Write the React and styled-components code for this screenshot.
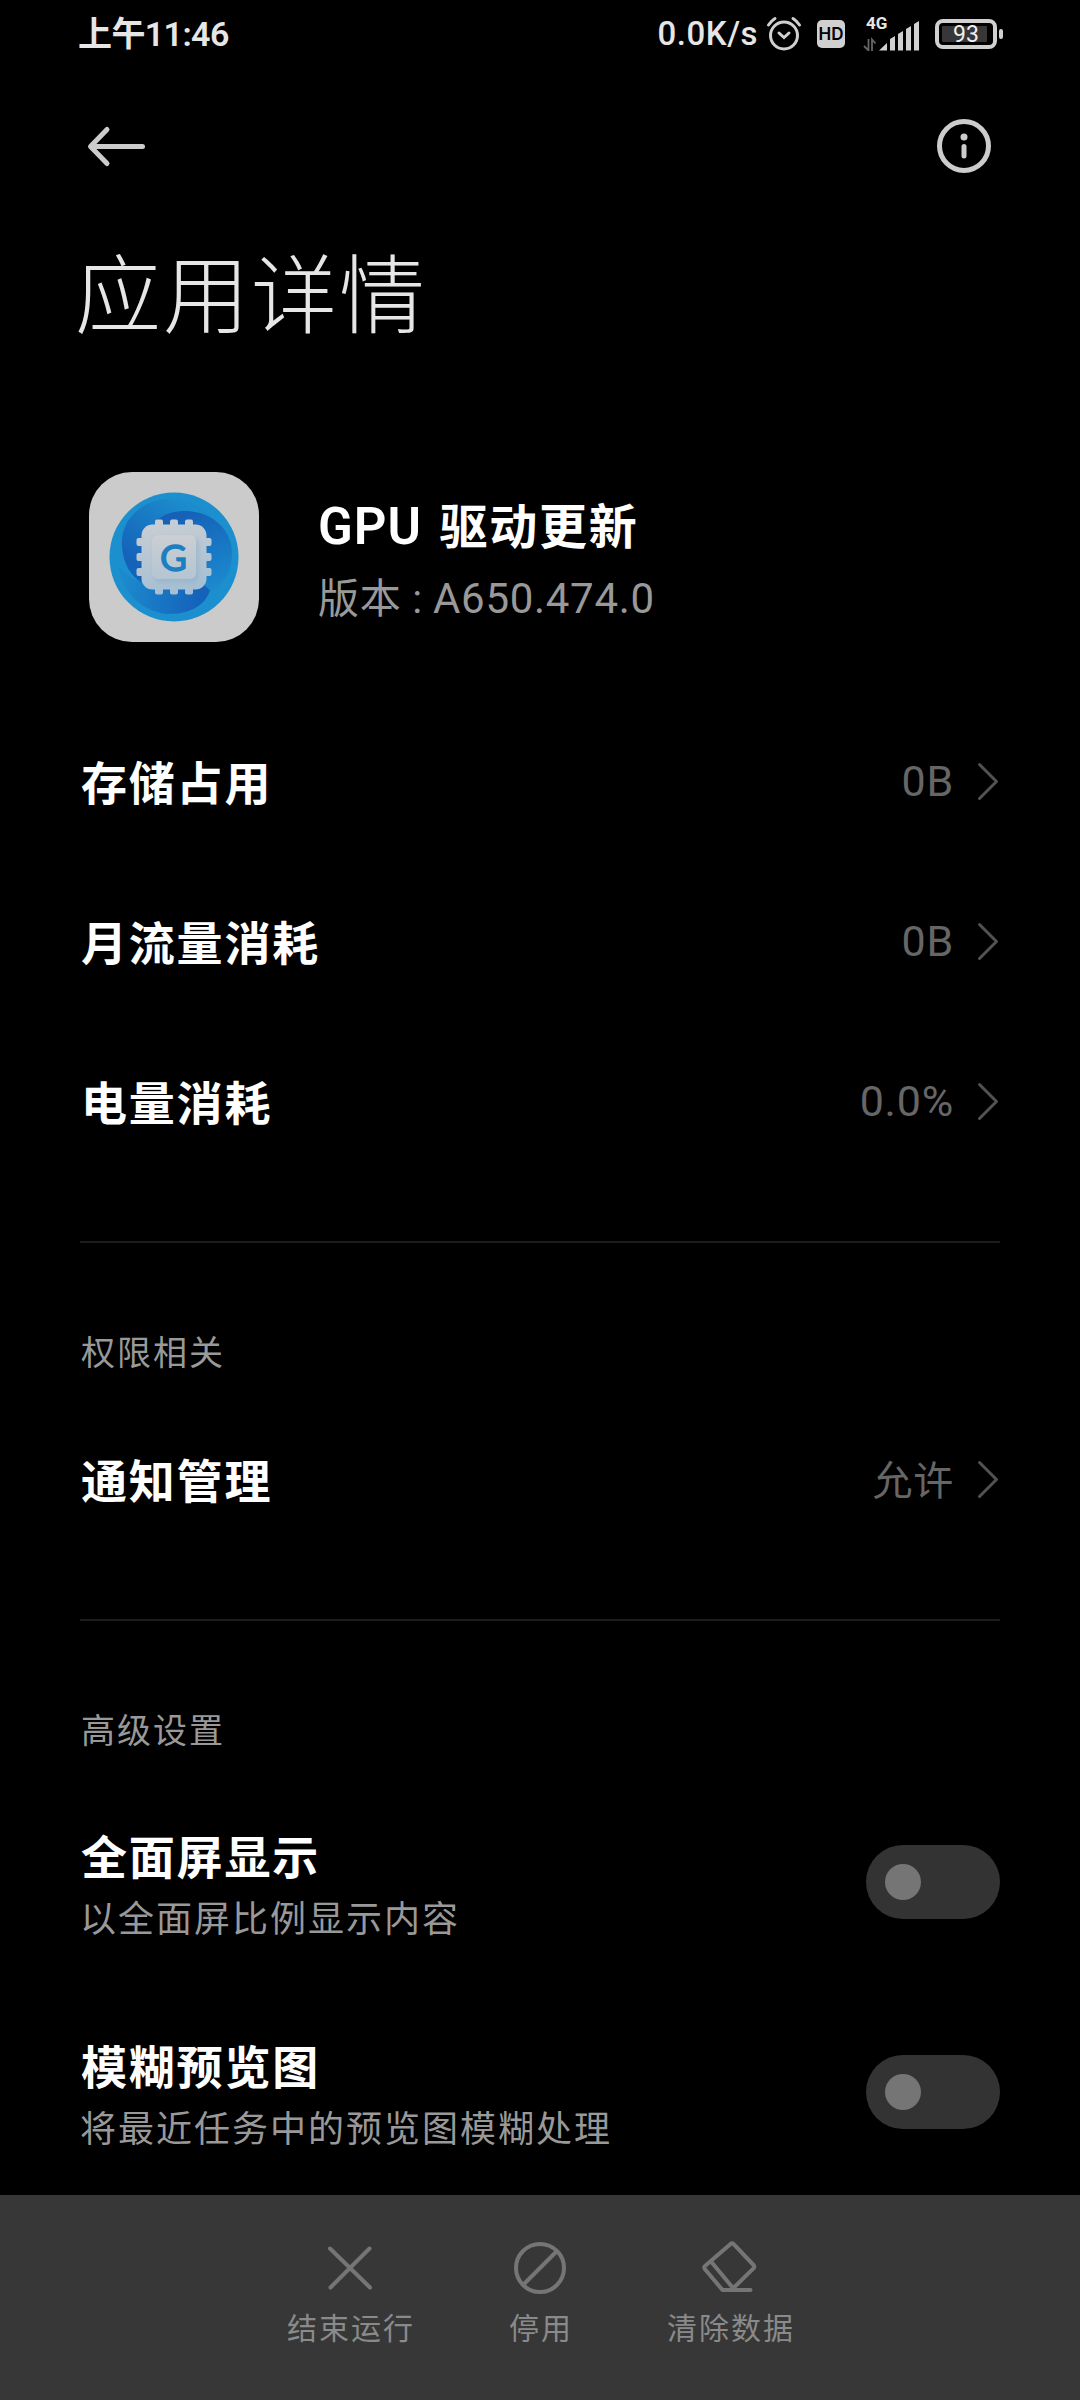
import React from "react";
import styled, { createGlobalStyle } from "styled-components";

const Global = createGlobalStyle`
  * { box-sizing: border-box; }
  body { margin: 0; background: #000; }
  svg { display: block; flex: none; }
`;

const Screen = styled.div`
  width: 1080px;
  height: 2400px;
  background: #000;
  color: #fff;
  display: flex;
  flex-direction: column;
  overflow: hidden;
  font-family: Roboto, "Noto Sans CJK SC", sans-serif;
  white-space: nowrap;
`;

const StatusBar = styled.header`
  height: 68px;
  flex: none;
  display: flex;
  align-items: center;
  justify-content: space-between;
  padding: 0 77px 0 78px;
  color: #e6e6e6;
`;
const Clock = styled.span`
  font-size: 34px;
  line-height: 40px;
  font-weight: 600;
  letter-spacing: -0.6px;
`;
const StatusIcons = styled.div`
  display: flex;
  align-items: center;
`;
const Speed = styled.span`
  font-size: 33px;
  line-height: 40px;
  font-weight: 500;
  letter-spacing: 0.5px;
  margin-right: 8px;
`;

const NavBar = styled.nav`
  height: 156px;
  flex: none;
  display: flex;
  align-items: center;
  justify-content: space-between;
  padding: 0 88px 0 87px;
`;

const Title = styled.h1`
  margin: 0;
  height: 140px;
  flex: none;
  padding: 4px 0 0 75px;
  font-size: 86px;
  line-height: 140px;
  font-weight: 300;
  letter-spacing: 2px;
  color: #e6e6e6;
`;

const AppHeader = styled.section`
  height: 170px;
  flex: none;
  margin-top: 108px;
  padding-left: 89px;
  display: flex;
  align-items: center;
  gap: 59px;
`;
const AppText = styled.div`
  display: flex;
  flex-direction: column;
  padding-top: 10px;
`;
const AppName = styled.h2`
  margin: 0;
  font-size: 48px;
  line-height: 72px;
  font-weight: 600;
  letter-spacing: 1.7px;
`;
const Latin = styled.span`
  font-size: 51px;
  letter-spacing: 1px;
  margin-right: 4px;
`;
const Version = styled.p`
  margin: 0;
  display: flex;
  font-size: 41px;
  line-height: 70px;
  letter-spacing: 0.7px;
  color: #999;
`;
const VersionLabel = styled.span`
  width: 115px;
`;
const VersionNumber = styled.span`
  font-size: 42px;
`;

const List = styled.section`
  display: flex;
  flex-direction: column;
  flex: none;
  margin: ${(p) => p.$margin || "0"};
  padding: 0 80px;
`;
const Row = styled.div`
  height: ${(p) => p.$height || 160}px;
  display: flex;
  align-items: center;
  justify-content: space-between;
`;
const RowTitle = styled.span`
  font-size: 46px;
  line-height: 62px;
  font-weight: 600;
  letter-spacing: 1.8px;
  padding: 3px 0 0 1px;
`;
const RowEnd = styled.span`
  display: flex;
  align-items: center;
  color: #666;
`;
const RowValue = styled.span`
  font-size: ${(p) => (p.$cjk ? 40 : 43)}px;
  line-height: 60px;
  letter-spacing: 0.8px;
  padding-top: ${(p) => (p.$cjk ? 4 : 0)}px;
  padding-bottom: ${(p) => (p.$cjk ? 0 : 2)}px;
  margin-right: 22px;
`;
const RowText = styled.div`
  display: flex;
  flex-direction: column;
  padding-top: 10px;
`;
const RowNote = styled.span`
  font-size: 36px;
  line-height: 62px;
  letter-spacing: 2px;
  color: #999;
`;
const Divider = styled.hr`
  flex: none;
  width: 920px;
  height: 2px;
  margin: 0 80px;
  border: 0;
  background: #1c1c1c;
`;
const GroupLabel = styled.h3`
  margin: 0;
  height: 48px;
  padding: 2px 0 0 1px;
  font-size: 34px;
  line-height: 48px;
  font-weight: 400;
  letter-spacing: 2px;
  color: #999;
`;

const Switch = styled.span`
  width: 134px;
  height: 74px;
  border-radius: 37px;
  padding-left: 19px;
  background: #333;
  display: flex;
  align-items: center;
`;
const Knob = styled.span`
  width: 36px;
  height: 36px;
  border-radius: 50%;
  background: #757575;
`;

const ActionBar = styled.footer`
  height: 205px;
  flex: none;
  margin-top: auto;
  padding-top: 43px;
  background: #373737;
  display: flex;
  justify-content: center;
`;
const Action = styled.button`
  width: 190px;
  padding: 0;
  border: 0;
  background: none;
  color: #8a8a8a;
  font: 400 30px/44px Roboto, "Noto Sans CJK SC", sans-serif;
  letter-spacing: 2px;
  display: flex;
  flex-direction: column;
  align-items: center;
  gap: 9px;
`;
const ActionLabel = styled.span`
  padding-left: 2px;
`;

const Chevron = () => (
  <svg width="24" height="40" viewBox="0 0 24 40" fill="none" stroke="#525252" strokeWidth="3" strokeLinecap="round" strokeLinejoin="round">
    <path d="M3.500 2.500 20.500 19.500 3.500 36.500" />
  </svg>
);

const AlarmIcon = () => (
  <svg width="36" height="36" viewBox="0 0 36 36" fill="none" stroke="#d0d0d0" strokeWidth="3" strokeLinecap="round">
    <circle cx="18" cy="19.500" r="13.500" />
    <path d="m13 17 5 4.500 5-4.500M2.500 9Q5 5 9 2.500M33.500 9Q31 5 27 2.500" />
  </svg>
);

const HdBadge = styled.span`
  width: 28px;
  height: 28px;
  margin: 0 18px 0 15px;
  border-radius: 5px;
  background: #d0d0d0;
  color: #000;
  font-family: Inter, sans-serif;
  font-size: 17px;
  font-weight: 600;
  line-height: 29px;
  text-align: center;
`;
const Signal = styled.span`
  width: 57px;
  height: 34px;
  display: flex;
  flex-direction: column;
  justify-content: flex-end;
`;
const Network = styled.span`
  margin: 0 0 -10px 3px;
  font-size: 17px;
  line-height: 16px;
  font-weight: 700;
`;

const SignalIcon = () => (
  <Signal>
    <Network>4G</Network>
    <svg width="57" height="30" viewBox="0 0 57 30" fill="#d0d0d0">
      <path d="M5.500 18v11.500L1 25M9 30V18.500l3.500 4" fill="none" stroke="#666" strokeWidth="1.800" />
      <path d="M16 29.500 24 22v7.500ZM27 18l5-3v14.500h-5ZM35 13l5-3v19.500h-5ZM43 8l5-3v24.500h-5ZM51 3l5-3v29.500h-5Z" />
    </svg>
  </Signal>
);

const Battery = styled.span`
  display: flex;
  align-items: center;
  gap: 2px;
  margin-left: 15px;
`;
const BatteryCase = styled.span`
  width: 62px;
  height: 30px;
  padding: 3px;
  border: 4px solid #d0d0d0;
  border-radius: 8px;
  display: flex;
`;
const BatteryLevel = styled.span`
  width: 45px;
  height: 16px;
  padding-left: 11px;
  border-radius: 1px;
  background: #373737;
  color: #f0f0f0;
  font-size: 23px;
  line-height: 18px;
`;
const BatteryTip = styled.span`
  width: 4px;
  height: 10px;
  border-radius: 2px;
  background: #d0d0d0;
`;

const BackIcon = () => (
  <svg width="60" height="44" viewBox="0 0 60 44" fill="none" stroke="#ccc" strokeWidth="5" strokeLinecap="round" strokeLinejoin="round">
    <path d="M55.500 22.500H4M20 5.500 3.500 22.500l16.500 17" />
  </svg>
);

const InfoIcon = () => (
  <svg width="56" height="56" viewBox="0 0 56 56" fill="none" stroke="#ccc" strokeWidth="5" strokeLinecap="round">
    <circle cx="28" cy="28" r="24.500" />
    <path d="M28 28.500v9.500" />
    <circle cx="28" cy="19" r="3.500" fill="#ccc" stroke="none" />
  </svg>
);

const GLabel = styled.text`
  font-family: Lato, sans-serif;
  font-size: 37px;
  font-weight: 400;
  stroke: #1c7fc0;
  stroke-width: 1.3px;
`;

const AppIcon = () => (
  <svg width="170" height="170" viewBox="0 0 170 170">
    <defs>
      <linearGradient id="arcLeft" gradientUnits="userSpaceOnUse" x1="90" y1="27" x2="42" y2="88">
        <stop offset="0" stopColor="#1c8ccd" />
        <stop offset="1" stopColor="#1463b9" />
      </linearGradient>
      <linearGradient id="arcRight" gradientUnits="userSpaceOnUse" x1="100" y1="39" x2="130" y2="116">
        <stop offset="0" stopColor="#1461b7" />
        <stop offset="1" stopColor="#1c8acf" />
      </linearGradient>
      <linearGradient id="arcBottom" gradientUnits="userSpaceOnUse" x1="36" y1="112" x2="112" y2="124">
        <stop offset="0" stopColor="#1c88cd" />
        <stop offset="1" stopColor="#1462ba" />
      </linearGradient>
      <linearGradient id="chip" gradientUnits="userSpaceOnUse" x1="75" y1="47" x2="90" y2="123">
        <stop offset="0" stopColor="#c9ced3" />
        <stop offset="1" stopColor="#a4bed3" />
      </linearGradient>
      <linearGradient id="core" x1="0" y1="0" x2="0" y2="1">
        <stop offset="0" stopColor="#cccfd2" />
        <stop offset="1" stopColor="#b4c5d2" />
      </linearGradient>
      <filter id="soft" x="-20%" y="-20%" width="140%" height="140%">
        <feGaussianBlur stdDeviation="2" />
      </filter>
    </defs>
    <rect width="170" height="170" rx="43" fill="#cbcbcb" />
    <circle cx="85" cy="85" r="64.500" fill="#1c8fce" />
    <path d="M33 74C31 50 50 29 78 27C95 27 110 32 120 42L60 60L53 111C42 104 34 92 33 74Z" fill="url(#arcLeft)" />
    <path d="M30 95C38 103 45 108 53 111L100 95L123 108C122 130 105 142 80 142C50 140 33 118 30 95Z" fill="url(#arcBottom)" />
    <path d="M66 50C75 41 86 39 98 39C124 40 143 58 143 82C143 100 134 112 123 120L100 100Z" fill="url(#arcRight)" />
    <g fill="url(#chip)">
      <rect x="52.500" y="52.500" width="65" height="65" rx="11" />
      {[66, 81, 96].map((x) => <rect key={x} x={x} y="47.500" width="8" height="75" rx="2" />)}
      {[66, 81, 96].map((y) => <rect key={y} x="47.500" y={y} width="75" height="8" rx="2" />)}
    </g>
    <rect x="65" y="66" width="45" height="45" rx="6" fill="#8eacc6" opacity="0.5" filter="url(#soft)" />
    <rect x="63" y="63" width="44" height="44" rx="6" fill="url(#core)" />
    <GLabel x="84.500" y="98.500" textAnchor="middle" fill="#1c7fc0">G</GLabel>
  </svg>
);

const ActionIcon = ({ children }) => (
  <svg width="60" height="60" viewBox="0 0 60 60" fill="none" stroke="#757575" strokeWidth="4" strokeLinecap="round" strokeLinejoin="round">
    {children}
  </svg>
);

const LinkRow = ({ title, value, cjk }) => (
  <Row>
    <RowTitle>{title}</RowTitle>
    <RowEnd><RowValue $cjk={cjk}>{value}</RowValue><Chevron /></RowEnd>
  </Row>
);

const ToggleRow = ({ title, note }) => (
  <Row $height={210}>
    <RowText>
      <RowTitle>{title}</RowTitle>
      <RowNote>{note}</RowNote>
    </RowText>
    <Switch><Knob /></Switch>
  </Row>
);

export default function App() {
  return (
    <Screen>
      <Global />
      <StatusBar>
        <Clock>上午11:46</Clock>
        <StatusIcons>
          <Speed>0.0K/s</Speed>
          <AlarmIcon />
          <HdBadge>HD</HdBadge>
          <SignalIcon />
          <Battery>
            <BatteryCase><BatteryLevel>93</BatteryLevel></BatteryCase>
            <BatteryTip />
          </Battery>
        </StatusIcons>
      </StatusBar>
      <NavBar>
        <BackIcon />
        <InfoIcon />
      </NavBar>
      <Title>应用详情</Title>
      <AppHeader>
        <AppIcon />
        <AppText>
          <AppName><Latin>GPU</Latin> 驱动更新</AppName>
          <Version>
            <VersionLabel>版本 :</VersionLabel>
            <VersionNumber>A650.474.0</VersionNumber>
          </Version>
        </AppText>
      </AppHeader>
      <List $margin="60px 0 59px">
        <LinkRow title="存储占用" value="0B" />
        <LinkRow title="月流量消耗" value="0B" />
        <LinkRow title="电量消耗" value="0.0%" />
      </List>
      <Divider />
      <List $margin="84px 0 59px">
        <GroupLabel>权限相关</GroupLabel>
        <Row $height={25} />
        <LinkRow title="通知管理" value="允许" cjk />
      </List>
      <Divider />
      <List $margin="84px 0 -2px">
        <GroupLabel>高级设置</GroupLabel>
        <Row $height={24} />
        <ToggleRow title="全面屏显示" note="以全面屏比例显示内容" />
        <ToggleRow title="模糊预览图" note="将最近任务中的预览图模糊处理" />
      </List>
      <ActionBar>
        <Action>
          <ActionIcon><path d="M10 10.500l40 39M49.500 10.500l-39 39" /></ActionIcon>
          <ActionLabel>结束运行</ActionLabel>
        </Action>
        <Action>
          <ActionIcon><circle cx="30" cy="30" r="24" /><path d="M46.500 13.500l-33 33" /></ActionIcon>
          <ActionLabel>停用</ActionLabel>
        </Action>
        <Action>
          <ActionIcon>
            <path d="M30.300 6.200q1.700-1.500 3.400 0L53.500 27q1.500 1.700 0 3.400L33 50.500M30.300 6.200 5 28q-1.500 1.500 0 3.200L22.500 52H50.500M11 23.500 33 50" />
          </ActionIcon>
          <ActionLabel>清除数据</ActionLabel>
        </Action>
      </ActionBar>
    </Screen>
  );
}
